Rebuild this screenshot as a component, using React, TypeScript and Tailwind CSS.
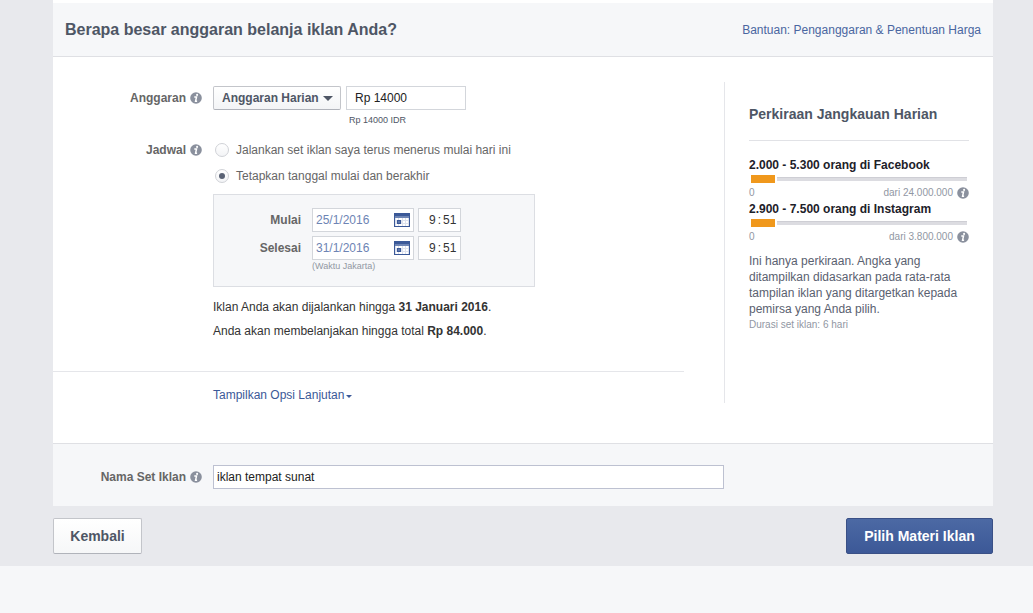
import { useState } from "react";

const fieldBorder = "border border-[#d3d6db] bg-white";

function InfoIcon() {
  return (
    <svg viewBox="0 0 12 12" className="size-3 shrink-0" aria-hidden="true">
      <circle cx="6" cy="6" r="5.8" fill="#8a909d" />
      <circle cx="7.1" cy="2.9" r="1.05" fill="#fff" />
      <path d="M4.3 5.1h2.2L5.6 9.2h1.5" fill="none" stroke="#fff" strokeWidth="1.5" />
    </svg>
  );
}

function CalendarIcon() {
  return (
    <svg viewBox="0 0 16 14" className="h-[14px] w-4" aria-hidden="true" shapeRendering="crispEdges">
      <rect width="16" height="14" fill="#3b5998" />
      <rect x="1" y="3" width="14" height="2" fill="#6d84b4" />
      <rect x="1" y="5" width="14" height="8" fill="#dde2ee" />
      <path d="M2 5h2v2H2zM5 5h3v2H5zM9 5h2v2H9zM12 5h2v2h-2zM9 8h2v2H9zM12 8h2v2h-2zM2 11h2v2H2zM5 11h3v2H5zM9 11h2v2H9zM12 11h2v2h-2z" fill="#fff" />
      <rect x="3" y="7" width="4" height="4" fill="#3b5998" />
      <rect x="4" y="8" width="2" height="2" fill="#5f78ac" />
    </svg>
  );
}

function FieldLabel({ htmlFor, children }: { htmlFor?: string; children: string }) {
  return (
    <div className="flex h-6 items-center justify-end gap-1 font-bold text-[#666]">
      {htmlFor ? <label htmlFor={htmlFor}>{children}</label> : <span id="schedule-label">{children}</span>}
      <InfoIcon />
    </div>
  );
}

function DateRow({ id, label, date }: { id: string; label: string; date: string }) {
  return (
    <div className="flex items-center gap-1">
      <label htmlFor={id} className="mr-[7px] w-[87px] text-right font-bold text-[#666]">
        {label}
      </label>
      <div className={`${fieldBorder} flex h-6 w-[102px] items-center justify-between px-[3px]`}>
        <input id={id} defaultValue={date} className="w-[70px] text-[#6d84b4] outline-none" />
        <button type="button" aria-label={`Pilih tanggal ${label}`}>
          <CalendarIcon />
        </button>
      </div>
      <div className={`${fieldBorder} flex h-6 w-[43px] items-center justify-end gap-[2px] pr-[3px] text-[#333]`}>
        <input aria-label={`Jam ${label}`} defaultValue="9" className="w-4 text-right outline-none" />
        <span>:</span>
        <input aria-label={`Menit ${label}`} defaultValue="51" className="w-[14px] outline-none" />
      </div>
    </div>
  );
}

function Reach({ title, total }: { title: string; total: string }) {
  return (
    <div className="h-11">
      <h4 className="leading-4 font-bold text-[#1d2129]">{title}</h4>
      <div className="mt-[2px] flex h-2 items-center gap-[2px] px-[2px]">
        <div className="h-2 w-6 bg-[#f0981c]" />
        <div className="h-1 flex-1 border-t border-[#ceced4] bg-[#dcdce1]" />
      </div>
      <div className="mt-[2px] flex h-4 items-center text-[10px] text-[#9197a3]">
        <span className="flex-1">0</span>
        <span className="mr-1">dari {total}</span>
        <InfoIcon />
      </div>
    </div>
  );
}

const schedules = [
  { value: "ongoing", text: "Jalankan set iklan saya terus menerus mulai hari ini" },
  { value: "dates", text: "Tetapkan tanggal mulai dan berakhir" },
];

export default function App() {
  const [schedule, setSchedule] = useState("dates");

  return (
    <div className="min-h-screen bg-[#f6f7f9] font-['Liberation_Sans',Arial,sans-serif] text-[12px] leading-4 text-[#333]">
      <form className="bg-[#e8e9ed] pr-10 pb-3 pl-[53px]">
        <div className="border-t-3 border-white bg-white">
          <header className="flex h-[54px] items-center justify-between border-b border-[#dfe0e4] bg-[#f6f7f9] px-3">
            <h2 className="text-[16px] leading-5 font-bold text-[#4e5665]">Berapa besar anggaran belanja iklan Anda?</h2>
            <a href="#bantuan" className="text-[#4a66a0]">
              Bantuan: Penganggaran &amp; Penentuan Harga
            </a>
          </header>

          <div className="flex gap-10 pt-[25px] pr-6 pb-10">
            <div className="flex-1 pt-1">
              <div className="grid grid-cols-[149px_1fr] gap-x-[11px]">
                <FieldLabel htmlFor="budget">Anggaran</FieldLabel>
                <div className="flex gap-[5px]">
                  <div className="relative h-6 w-32">
                    <select
                      aria-label="Jenis anggaran"
                      className="h-6 w-full appearance-none rounded-[2px] border border-[#c3c5ca] border-b-[#b0b3ba] bg-linear-to-b from-white to-[#f3f4f6] pl-2 font-bold text-[#4e5665]"
                    >
                      <option>Anggaran Harian</option>
                      <option>Anggaran Seumur Hidup</option>
                    </select>
                    <svg viewBox="0 0 10 5" className="pointer-events-none absolute top-[10px] right-2 h-[5px] w-[10px]" aria-hidden="true">
                      <path d="M0 0h10L5 5z" fill="#4e5665" />
                    </svg>
                  </div>
                  <div>
                    <input id="budget" defaultValue="Rp 14000" className={`${fieldBorder} block h-6 w-[120px] px-2 text-[#222]`} />
                    <p className="mt-[2px] pl-[3px] text-[9px] text-[#4e5665]">Rp 14000 IDR</p>
                  </div>
                </div>

                <div className="mt-[10px]">
                  <FieldLabel>Jadwal</FieldLabel>
                </div>
                <div className="mt-[10px]">
                  <div role="radiogroup" aria-labelledby="schedule-label" className="flex flex-col gap-[2px]">
                    {schedules.map((s) => (
                      <label key={s.value} className="flex h-6 items-center gap-[7px] pl-[2px] text-[#666]">
                        <input
                          type="radio"
                          name="schedule"
                          checked={schedule === s.value}
                          onChange={() => setSchedule(s.value)}
                          className="grid size-[14px] appearance-none place-items-center rounded-full border border-[#d0d2d7] bg-linear-to-b from-white to-[#f3f4f6] checked:before:size-[6px] checked:before:rounded-full checked:before:bg-[#5a6275]"
                        />
                        {s.text}
                      </label>
                    ))}
                  </div>
                  <div className="mt-[6px] flex h-[93px] w-[322px] flex-col gap-1 border border-[#dcdee3] bg-[#f6f7f9] pt-[13px]">
                    <DateRow id="start" label="Mulai" date="25/1/2016" />
                    <DateRow id="end" label="Selesai" date="31/1/2016" />
                    <p className="-mt-1 pl-[98px] text-[9px] leading-3 text-[#9197a3]">(Waktu Jakarta)</p>
                  </div>
                  <p className="mt-3">
                    Iklan Anda akan dijalankan hingga <b>31 Januari 2016</b>.
                  </p>
                  <p className="mt-2">
                    Anda akan membelanjakan hingga total <b>Rp 84.000</b>.
                  </p>
                </div>
              </div>
              <div className="mt-8 border-t border-[#e5e6ea] pt-[15px] pl-40">
                <button type="button" className="flex items-center gap-[2px] text-[#3b5998]">
                  Tampilkan Opsi Lanjutan
                  <svg viewBox="0 0 6 3" className="mt-[2px] h-[3px] w-[6px]" aria-hidden="true">
                    <path d="M0 0h6L3 3z" fill="#3b5998" />
                  </svg>
                </button>
              </div>
            </div>

            <aside className="w-[245px] border-l border-[#e5e6ea] pl-6">
              <h3 className="mt-6 border-b border-[#e1e2e6] pb-[18px] text-[14px] font-bold text-[#4e5665]">
                Perkiraan Jangkauan Harian
              </h3>
              <div className="mt-4">
                <Reach title="2.000 - 5.300 orang di Facebook" total="24.000.000" />
                <Reach title="2.900 - 7.500 orang di Instagram" total="3.800.000" />
              </div>
              <p className="mt-2 text-[#5a6170]">
                Ini hanya perkiraan. Angka yang ditampilkan didasarkan pada rata-rata tampilan iklan yang ditargetkan kepada
                pemirsa yang Anda pilih.
              </p>
              <p className="text-[10px] text-[#9197a3]">Durasi set iklan: 6 hari</p>
            </aside>
          </div>

          <section className="grid h-[63px] grid-cols-[149px_511px] items-center gap-x-[11px] border-t border-[#dfe0e4] bg-[#f6f7f9] pt-1">
            <FieldLabel htmlFor="adset-name">Nama Set Iklan</FieldLabel>
            <input id="adset-name" defaultValue="iklan tempat sunat" className="h-6 border border-[#bdc1d1] bg-white px-[3px] text-[#222]" />
          </section>
        </div>

        <footer className="flex justify-between pt-3 text-[14px] font-bold">
          <button
            type="button"
            className="h-9 min-w-[89px] rounded-[2px] border border-[#c3c5ca] border-b-[#b0b3ba] bg-linear-to-b from-white to-[#f6f7f8] px-4 text-[#4e5665]"
          >
            Kembali
          </button>
          <button
            type="button"
            className="h-9 min-w-[147px] rounded-[2px] border border-[#3a5086] bg-linear-to-b from-[#4c69a4] to-[#3c5897] px-4 text-white"
          >
            Pilih Materi Iklan
          </button>
        </footer>
      </form>
    </div>
  );
}
